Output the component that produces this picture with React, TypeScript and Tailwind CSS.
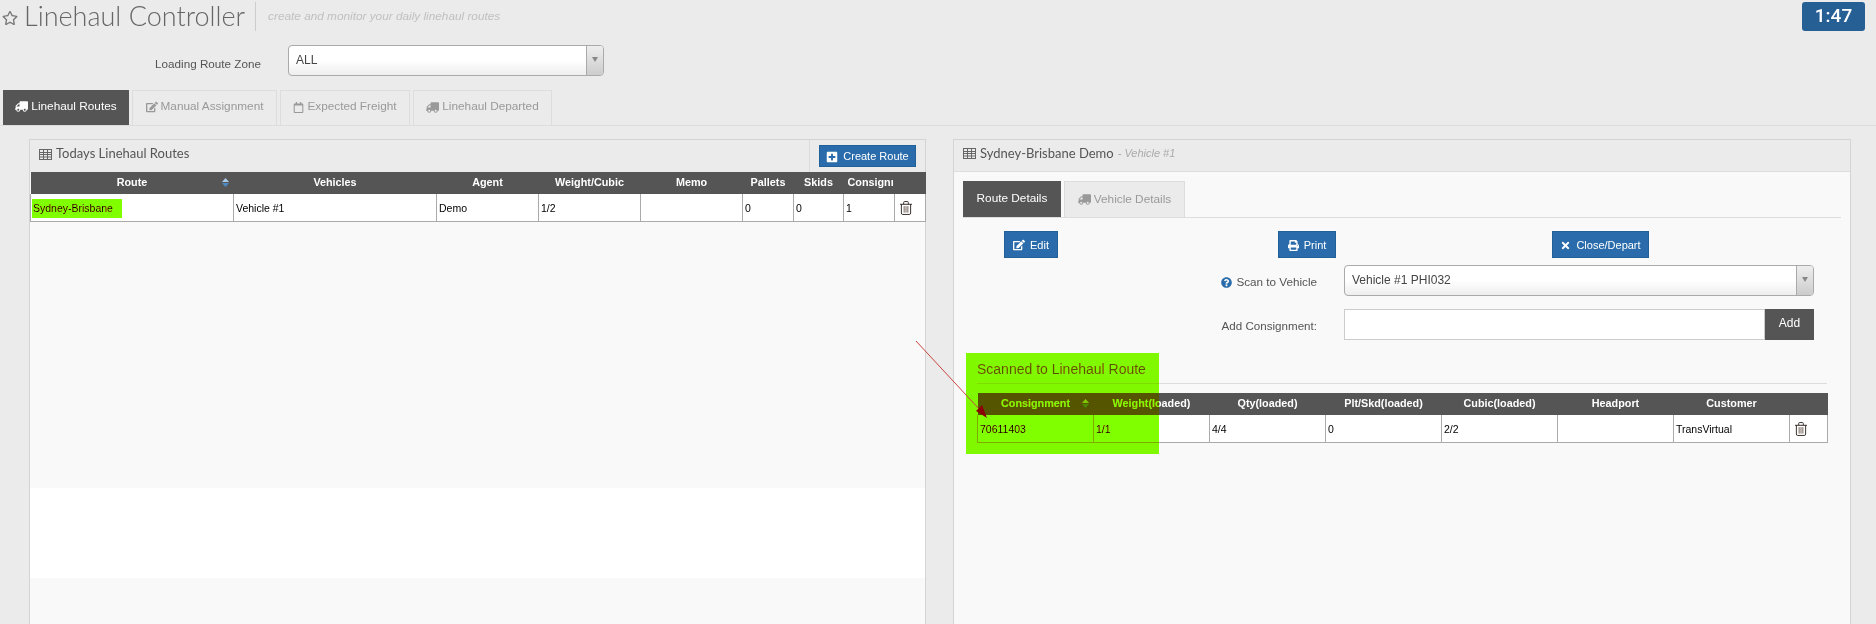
import { FaEdit, FaPlusSquare, FaPrint, FaQuestionCircle, FaRegCalendar, FaRegStar, FaTimes, FaTruck } from "react-icons/fa"

const TableIcon = () => (
    <svg width="13" height="11" viewBox="0 0 13 11" className="text-[#666666] shrink-0" fill="none" stroke="currentColor" strokeWidth="1">
        <rect x="0.5" y="0.5" width="12" height="10" />
        <path d="M0 3.5H13M0 5.5H13M0 8H13M4.5 0V11M8.5 0V11" />
    </svg>
)

const TrashIcon = () => (
    <svg width="12" height="14" viewBox="0 0 13 15" className="ml-[3px] -mt-[3px] text-[#2b2320]" fill="none" stroke="currentColor" strokeWidth="1">
        <path d="M0 3.5H13M4 3.5V1.5Q4 0.5 5 0.5H8Q9 0.5 9 1.5V3.5" />
        <path d="M1.5 3.5V13Q1.5 14.5 3 14.5H10Q11.5 14.5 11.5 13V3.5" />
        <path d="M4.5 5.5V12.5M6.5 5.5V12.5M8.5 5.5V12.5" stroke="#6b5a50" />
    </svg>
)

const SortIcon = () => (
    <svg width="7" height="9" viewBox="0 0 7 9" className="absolute right-[5px] top-[6px]">
        <path d="M3.5 0L7 4H0Z" fill="#a9c8e6" />
        <path d="M0 5H7L3.5 9Z" fill="#4d8ac4" />
    </svg>
)

const DarkTh = ({ children, sort }: { children?: React.ReactNode, sort?: boolean }) => (
    <th className="relative h-[22px] p-0 pb-px text-center font-bold text-white text-[10.8px] overflow-hidden whitespace-nowrap">
        {children}
        {sort && <SortIcon />}
    </th>
)

const Td = ({ children }: { children?: React.ReactNode }) => (
    <td className="h-[27px] px-[2px] pt-[4px] border-x border-b border-[#aaaaaa] bg-white text-[10.5px] text-black whitespace-nowrap">{children}</td>
)

const SelectBox = ({ value, className }: { value: string, className: string }) => (
    <div className={`h-[31px] flex border border-[#aaaaaa] rounded-[4px] overflow-hidden bg-gradient-to-b from-white from-50% to-[#eeeeee] ${className}`}>
        <span className="flex-1 pl-[7px] pt-[6px] text-[12px] leading-[16px] text-[#444444]">{value}</span>
        <span className="w-[17px] flex justify-center pt-[11px] border-l border-[#aaaaaa] bg-gradient-to-b from-[#eeeeee] to-[#cccccc]">
            <span className="w-0 h-0 border-x-[3px] border-x-transparent border-t-[5px] border-t-[#888888]"></span>
        </span>
    </div>
)

const BlueBtn = ({ icon, label, className }: { icon: React.ReactNode, label: string, className: string }) => (
    <button className={`flex items-center justify-center gap-[5px] bg-[#2a6cab] border border-[#22609a] text-white text-[11px] pt-px ${className}`}>
        {icon}{label}
    </button>
)

const TopTab = ({ icon, label, active, className }: { icon?: React.ReactNode, label: string, active?: boolean, className: string }) => (
    <div className={`flex items-center justify-center gap-[3px] text-[11.8px] ${active ? "bg-[#555555] text-white" : "bg-[#ebebeb] text-[#999999] border-x border-t border-[#dddddd]"} ${className}`}>
        {icon}{label}
    </div>
)

export default function App() {
    return (
        <div className="relative w-[1876px] h-[624px] overflow-hidden flex flex-col bg-[#ebebeb] font-['Liberation_Sans',Arial,sans-serif]">
            {/* titulo */}
            <div className="h-[45px] flex items-start pt-[2px] pl-[2px] pr-[11px] shrink-0">
                <FaRegStar className="mt-[8px] text-[16px] text-[#777777]" />
                <h1 className="ml-[6px] h-[29px] leading-[27px] text-[27px] font-light text-[#666666] font-['Lato',sans-serif] whitespace-nowrap">Linehaul Controller</h1>
                <div className="ml-[10px] w-px h-[29px] bg-[#cccccc]"></div>
                <p className="ml-[12px] mt-[6px] text-[11.8px] italic text-[#c0c0c0] whitespace-nowrap">create and monitor your daily linehaul routes</p>
                <div className="ml-auto w-[63px] h-[29px] flex items-center justify-center rounded-[3px] bg-[#265f94] text-white text-[19px] font-medium font-['Roboto',sans-serif]">1:47</div>
            </div>

            {/* zona */}
            <div className="h-[45px] flex items-start shrink-0">
                <label className="w-[261px] pt-[10px] text-right text-[11.7px] text-[#555555] whitespace-nowrap">Loading Route Zone</label>
                <SelectBox value="ALL" className="ml-[27px] w-[316px]" />
            </div>

            {/* abas */}
            <div className="h-[36px] flex items-stretch gap-[3px] pl-[3px] border-b border-[#dddddd] shrink-0">
                <TopTab active className="w-[126px] pb-[2px]" icon={<FaTruck className="-scale-x-100 text-[13px]" />} label="Linehaul Routes" />
                <TopTab className="w-[145px] pb-[2px]" icon={<FaEdit className="text-[12px]" />} label="Manual Assignment" />
                <TopTab className="w-[130px] pb-[2px]" icon={<FaRegCalendar className="text-[11px]" />} label="Expected Freight" />
                <TopTab className="w-[139px] pb-[2px]" icon={<FaTruck className="-scale-x-100 text-[13px]" />} label="Linehaul Departed" />
            </div>

            {/* paineis */}
            <div className="flex-1 min-h-0 flex pt-[13px] pl-[29px] pr-[25px] gap-[27px]">
                <section className="w-[897px] flex flex-col border border-b-0 border-[#d4d4d4] bg-[#f9f9f9]">
                    <div className="h-[32px] flex items-center bg-[#ebebeb] shrink-0">
                        <div className="flex items-center gap-[4px] pl-[9px] pb-[4px]">
                            <TableIcon />
                            <h2 className="text-[13px] text-[#555555] font-['Lato',sans-serif]">Todays Linehaul Routes</h2>
                        </div>
                        <div className="ml-auto w-[116px] h-full flex items-center justify-center border-l border-[#dddddd]">
                            <BlueBtn className="w-[97px] h-[22px]" icon={<FaPlusSquare className="text-[12px]" />} label="Create Route" />
                        </div>
                    </div>
                    <table className="w-[895px] table-fixed border-collapse">
                        <colgroup>
                            <col className="w-[203px]" />
                            <col className="w-[203px]" />
                            <col className="w-[102px]" />
                            <col className="w-[102px]" />
                            <col className="w-[102px]" />
                            <col className="w-[51px]" />
                            <col className="w-[50px]" />
                            <col className="w-[51px]" />
                            <col className="w-[31px]" />
                        </colgroup>
                        <thead className="bg-[#555555]">
                            <tr>
                                <DarkTh sort>Route</DarkTh>
                                <DarkTh>Vehicles</DarkTh>
                                <DarkTh>Agent</DarkTh>
                                <DarkTh>Weight/Cubic</DarkTh>
                                <DarkTh>Memo</DarkTh>
                                <DarkTh>Pallets</DarkTh>
                                <DarkTh>Skids</DarkTh>
                                <DarkTh><span className="block ml-[4px] w-[45px] overflow-hidden text-left">Consignment</span></DarkTh>
                                <DarkTh></DarkTh>
                            </tr>
                        </thead>
                        <tbody>
                            <tr>
                                <Td>Sydney-Brisbane</Td>
                                <Td>Vehicle #1</Td>
                                <Td>Demo</Td>
                                <Td>1/2</Td>
                                <Td></Td>
                                <Td>0</Td>
                                <Td>0</Td>
                                <Td>1</Td>
                                <Td><TrashIcon /></Td>
                            </tr>
                        </tbody>
                    </table>
                    <div className="h-[266px] shrink-0"></div>
                    <div className="h-[90px] bg-white shrink-0"></div>
                </section>

                <section className="w-[898px] flex flex-col border border-b-0 border-[#d4d4d4] bg-[#f9f9f9]">
                    <div className="h-[32px] flex items-center gap-[4px] pl-[9px] pb-[4px] bg-[#ebebeb] border-b border-[#dddddd] shrink-0">
                        <TableIcon />
                        <h2 className="text-[13px] text-[#555555] font-['Lato',sans-serif]">Sydney-Brisbane Demo</h2>
                        <span className="text-[11px] italic text-[#aaaaaa]">- Vehicle #1</span>
                    </div>

                    <div className="mx-[9px] mt-[9px] h-[37px] flex gap-[3px] border-b border-[#dddddd] shrink-0">
                        <TopTab active className="w-[98px]" label="Route Details" />
                        <TopTab className="w-[121px]" icon={<FaTruck className="-scale-x-100 text-[13px]" />} label="Vehicle Details" />
                    </div>

                    <div className="mt-[13px] h-[27px] flex shrink-0">
                        <BlueBtn className="ml-[50px] w-[54px]" icon={<FaEdit className="text-[12px]" />} label="Edit" />
                        <BlueBtn className="ml-[220px] w-[58px]" icon={<FaPrint className="text-[11px]" />} label="Print" />
                        <BlueBtn className="ml-[216px] w-[97px]" icon={<FaTimes className="text-[11px]" />} label="Close/Depart" />
                    </div>

                    <div className="mt-[7px] flex shrink-0">
                        <label className="w-[363px] flex items-center justify-end gap-[4px] text-[11.7px] text-[#555555] pt-[3px]">
                            <FaQuestionCircle className="text-[11px] text-[#2a6cab]" />Scan to Vehicle
                        </label>
                        <SelectBox value="Vehicle #1 PHI032" className="ml-[27px] w-[470px]" />
                    </div>

                    <div className="mt-[13px] h-[31px] flex shrink-0">
                        <label className="w-[363px] flex items-center justify-end text-[11.6px] text-[#555555] pt-[2px]">Add Consignment:</label>
                        <input className="ml-[27px] w-[421px] h-full border border-[#cccccc] bg-white" />
                        <button className="w-[49px] h-full bg-[#555555] text-white text-[12px] pb-[3px]">Add</button>
                    </div>

                    <div className="relative mx-[23px] mt-[18px] shrink-0">
                        <h3 className="h-[26px] text-[14px] leading-[17px] pt-[3px] text-[#555555] border-b border-[#dddddd]">Scanned to Linehaul Route</h3>
                        <table className="mt-[9px] w-[850px] table-fixed border-collapse">
                            <colgroup>
                                <col className="w-[116px]" />
                                <col className="w-[116px]" />
                                <col className="w-[116px]" />
                                <col className="w-[116px]" />
                                <col className="w-[116px]" />
                                <col className="w-[116px]" />
                                <col className="w-[116px]" />
                                <col className="w-[38px]" />
                            </colgroup>
                            <thead className="bg-[#555555]">
                                <tr>
                                    <DarkTh sort>Consignment</DarkTh>
                                    <DarkTh>Weight(loaded)</DarkTh>
                                    <DarkTh>Qty(loaded)</DarkTh>
                                    <DarkTh>Plt/Skd(loaded)</DarkTh>
                                    <DarkTh>Cubic(loaded)</DarkTh>
                                    <DarkTh>Headport</DarkTh>
                                    <DarkTh>Customer</DarkTh>
                                    <DarkTh></DarkTh>
                                </tr>
                            </thead>
                            <tbody>
                                <tr>
                                    <Td>70611403</Td>
                                    <Td>1/1</Td>
                                    <Td>4/4</Td>
                                    <Td>0</Td>
                                    <Td>2/2</Td>
                                    <Td></Td>
                                    <Td>TransVirtual</Td>
                                    <Td><TrashIcon /></Td>
                                </tr>
                            </tbody>
                        </table>
                    </div>
                    <div className="flex-1"></div>
                </section>
            </div>

            {/* marcacoes por cima do print */}
            <div className="absolute left-[32px] top-[199px] w-[90px] h-[19px] bg-[#80ff00] mix-blend-darken"></div>
            <div className="absolute left-[966px] top-[353px] w-[193px] h-[101px] bg-[#80ff00] mix-blend-darken"></div>
            <svg className="absolute left-[910px] top-[335px]" width="90" height="95" viewBox="0 0 90 95">
                <line x1="6" y1="6" x2="70" y2="75" stroke="#c9443f" strokeWidth="1" />
                <polygon points="77,83 66,76 72,70" fill="#8b0000" />
            </svg>
        </div>
    )
}
